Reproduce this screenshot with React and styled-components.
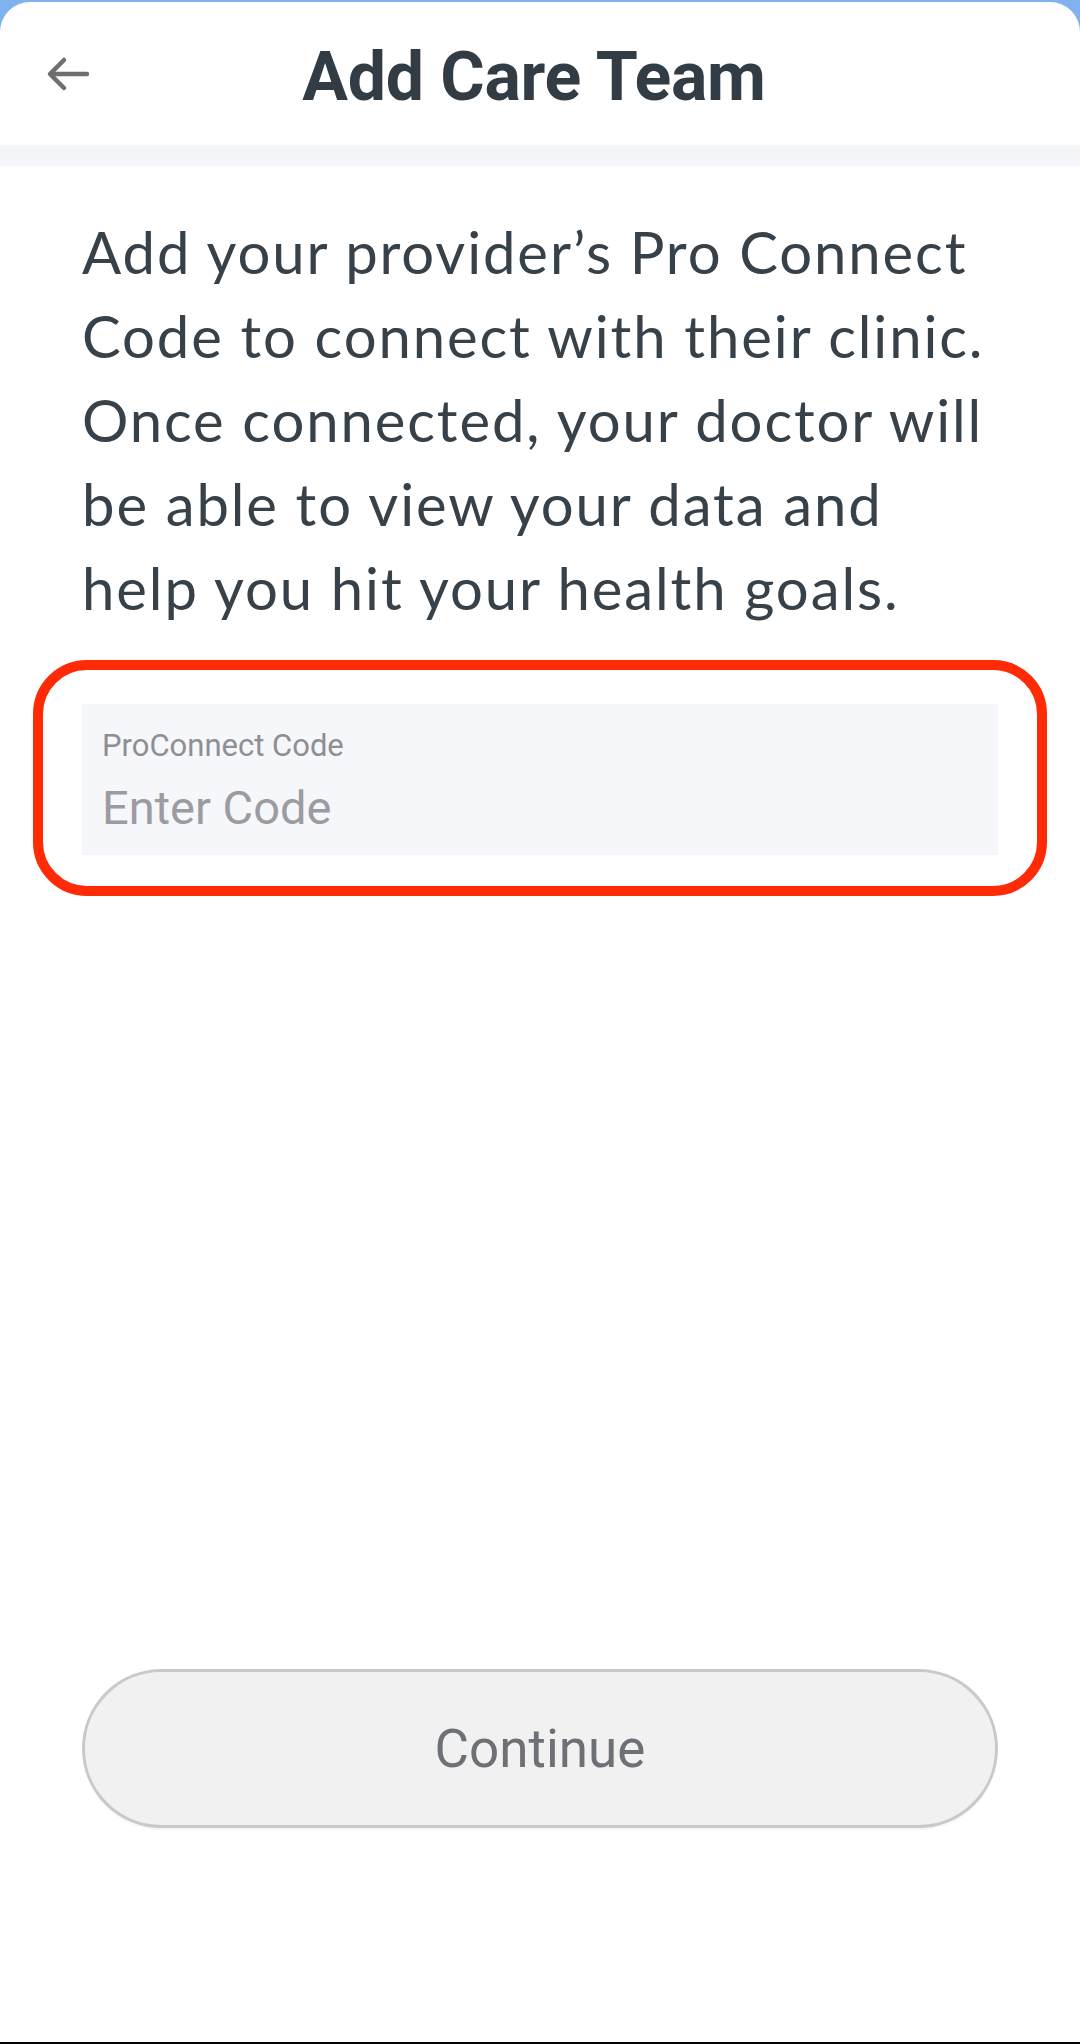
import React from 'react';
import styled, { createGlobalStyle } from 'styled-components';

const GlobalStyle = createGlobalStyle`
  html, body {
    margin: 0;
    padding: 0;
    background: #7fb2ee;
  }
  * {
    box-sizing: border-box;
  }
`;

const Screen = styled.div`
  width: 1080px;
  height: 2044px;
  padding-top: 2px;
  background: #7fb2ee;
  display: flex;
  flex-direction: column;
`;

const Card = styled.div`
  flex: 1;
  display: flex;
  flex-direction: column;
  background: #ffffff;
  border-radius: 30px 30px 0 0;
  border-bottom: 2px solid #000000;
  overflow: hidden;
`;

const Header = styled.header`
  height: 143px;
  display: grid;
  grid-template-columns: 1fr auto 1fr;
  align-items: center;
  padding: 0 0 0 44px;
`;

const BackButton = styled.button`
  justify-self: start;
  width: 48px;
  height: 48px;
  padding: 0;
  border: none;
  background: none;
  display: flex;
  align-items: center;
  justify-content: center;
`;

const Title = styled.h1`
  margin: 6px 0 0 0;
  font-family: Roboto, 'Liberation Sans', sans-serif;
  font-weight: 700;
  font-size: 68px;
  letter-spacing: -0.3px;
  color: #313c45;
  transform: translateX(-28px);
`;

const Band = styled.div`
  height: 21px;
  background: #f4f5f8;
`;

const Main = styled.main`
  flex: 1;
  display: flex;
  flex-direction: column;
  padding: 0 33px;
`;

const Intro = styled.p`
  margin: 44px 0 30px;
  padding: 0 62px 0 49px;
  font-family: Lato, 'Open Sans', sans-serif;
  font-weight: 400;
  font-size: 58px;
  line-height: 84px;
  letter-spacing: 1.9px;
  color: #36414a;
`;

const Highlight = styled.div`
  border: 10px solid #ff2a06;
  border-radius: 54px;
  padding: 34px 39px 31px;
`;

const Field = styled.label`
  height: 151px;
  display: flex;
  flex-direction: column;
  padding: 24px 20px 0;
  background: #f6f7fa;
`;

const FieldLabel = styled.span`
  font-family: Roboto, 'Liberation Sans', sans-serif;
  font-size: 31px;
  line-height: 36px;
  color: #8e8e94;
`;

const FieldInput = styled.input`
  margin-top: 16px;
  padding: 0;
  border: none;
  outline: none;
  background: transparent;
  font-family: Roboto, 'Liberation Sans', sans-serif;
  font-size: 47px;
  line-height: 56px;
  color: #2f3a43;
  &::placeholder {
    color: #9b9ba1;
  }
`;

const Footer = styled.div`
  padding: 0 82px 214px;
`;

const ContinueButton = styled.button`
  width: 100%;
  height: 159px;
  border: 3px solid #c9c9c9;
  border-radius: 80px;
  background: #f1f1f1;
  font-family: Roboto, 'Liberation Sans', sans-serif;
  font-size: 53px;
  color: #6d7175;
  box-shadow: 0 3px 2px -1px rgba(0, 0, 0, 0.04);
`;

function ArrowLeft() {
  return (
    <svg width="44" height="36" viewBox="0 0 44 36" fill="none">
      <path
        d="M41 18H5M18 4L4 18L18 32"
        stroke="#6f6f6f"
        strokeWidth="4.5"
        strokeLinecap="round"
        strokeLinejoin="round"
      />
    </svg>
  );
}

export default function App() {
  return (
    <>
      <GlobalStyle />
      <Screen>
        <Card>
          <Header>
            <BackButton aria-label="Back">
              <ArrowLeft />
            </BackButton>
            <Title>Add Care Team</Title>
            <span />
          </Header>
          <Band />
          <Main>
            <Intro>
              Add your provider’s Pro Connect Code to connect with their clinic.
              Once connected, your doctor will be able to view your data and
              help you hit your health goals.
            </Intro>
            <Highlight>
              <Field>
                <FieldLabel>ProConnect Code</FieldLabel>
                <FieldInput placeholder="Enter Code" />
              </Field>
            </Highlight>
          </Main>
          <Footer>
            <ContinueButton>Continue</ContinueButton>
          </Footer>
        </Card>
      </Screen>
    </>
  );
}
